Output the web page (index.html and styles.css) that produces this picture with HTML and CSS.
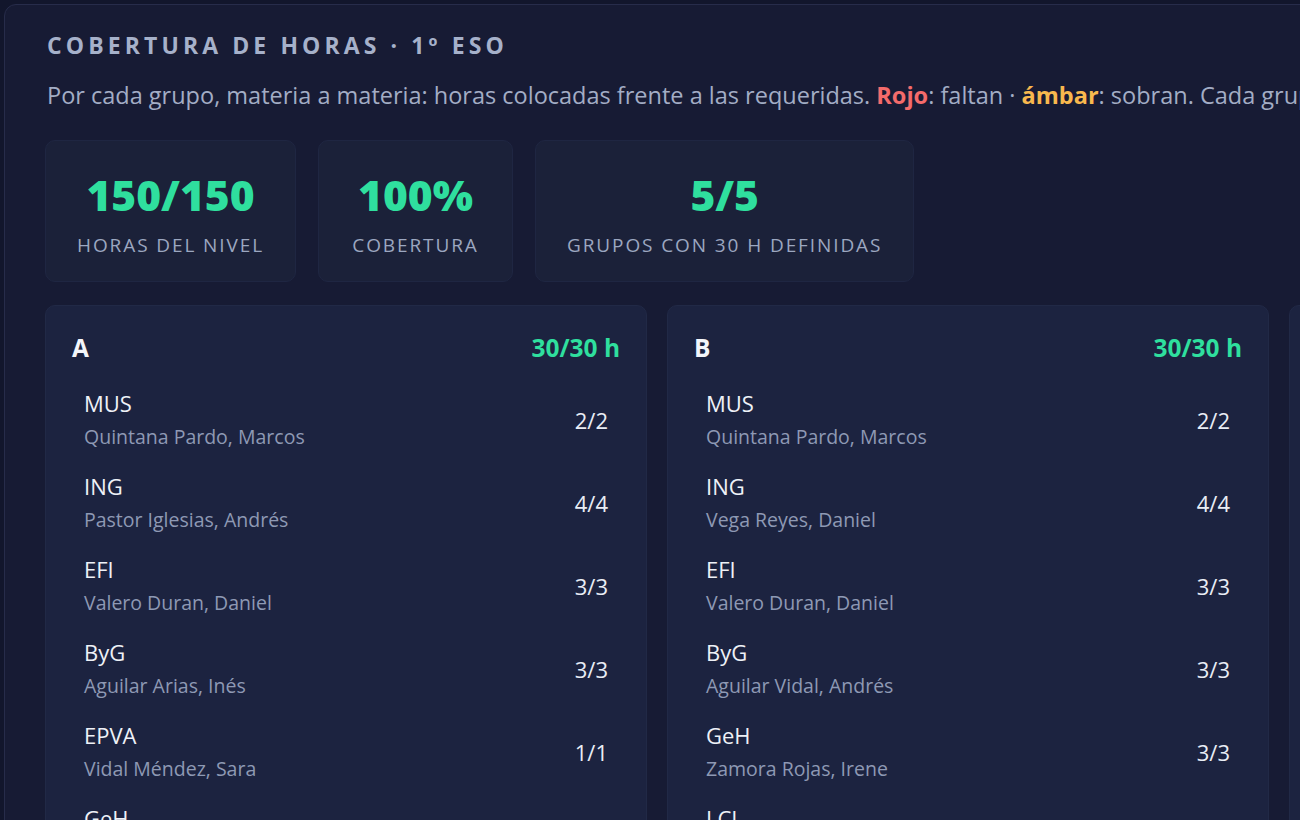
FILE: index.html
```html
<!DOCTYPE html>
<html lang="es">
<head>
    <meta charset="UTF-8">
    <meta name="viewport" content="width=device-width, initial-scale=1.0">
    <title>Cobertura de horas · 1º ESO</title>
    <link rel="stylesheet" href="styles.css">
</head>
<body>
    <div class="panel">
        <h2 class="title">Cobertura de horas · 1º ESO</h2>
        <p class="desc">Por cada grupo, materia a materia: horas colocadas frente a las requeridas. <b class="red">Rojo</b>: faltan · <b class="amber">ámbar</b>: sobran. Cada grupo debe sumar 30 horas semanales.</p>

        <div class="stats">
            <div class="stat">
                <div class="stat-num">150/150</div>
                <div class="stat-label">Horas del nivel</div>
            </div>
            <div class="stat">
                <div class="stat-num">100%</div>
                <div class="stat-label">Cobertura</div>
            </div>
            <div class="stat">
                <div class="stat-num">5/5</div>
                <div class="stat-label">Grupos con 30 h definidas</div>
            </div>
        </div>

        <div class="groups">
            <div class="group">
                <div class="group-head"><span class="group-name">A</span><span class="group-total">30/30 h</span></div>
                <div class="row"><div><div class="subj">MUS</div><div class="teacher">Quintana Pardo, Marcos</div></div><span class="hrs">2/2</span></div>
                <div class="row"><div><div class="subj">ING</div><div class="teacher">Pastor Iglesias, Andrés</div></div><span class="hrs">4/4</span></div>
                <div class="row"><div><div class="subj">EFI</div><div class="teacher">Valero Duran, Daniel</div></div><span class="hrs">3/3</span></div>
                <div class="row"><div><div class="subj">ByG</div><div class="teacher">Aguilar Arias, Inés</div></div><span class="hrs">3/3</span></div>
                <div class="row"><div><div class="subj">EPVA</div><div class="teacher">Vidal Méndez, Sara</div></div><span class="hrs">1/1</span></div>
                <div class="row"><div><div class="subj">GeH</div><div class="teacher">Zamora Rojas, Irene</div></div><span class="hrs">3/3</span></div>
                <div class="row"><div><div class="subj">LCL</div><div class="teacher">Herrera Campos, Lucía</div></div><span class="hrs">5/5</span></div>
            </div>
            <div class="group">
                <div class="group-head"><span class="group-name">B</span><span class="group-total">30/30 h</span></div>
                <div class="row"><div><div class="subj">MUS</div><div class="teacher">Quintana Pardo, Marcos</div></div><span class="hrs">2/2</span></div>
                <div class="row"><div><div class="subj">ING</div><div class="teacher">Vega Reyes, Daniel</div></div><span class="hrs">4/4</span></div>
                <div class="row"><div><div class="subj">EFI</div><div class="teacher">Valero Duran, Daniel</div></div><span class="hrs">3/3</span></div>
                <div class="row"><div><div class="subj">ByG</div><div class="teacher">Aguilar Vidal, Andrés</div></div><span class="hrs">3/3</span></div>
                <div class="row"><div><div class="subj">GeH</div><div class="teacher">Zamora Rojas, Irene</div></div><span class="hrs">3/3</span></div>
                <div class="row"><div><div class="subj">LCL</div><div class="teacher">Herrera Campos, Lucía</div></div><span class="hrs">5/5</span></div>
            </div>
            <div class="group">
                <div class="group-head"><span class="group-name">C</span><span class="group-total">30/30 h</span></div>
                <div class="row"><div><div class="subj">MUS</div><div class="teacher">Quintana Pardo, Marcos</div></div><span class="hrs">2/2</span></div>
                <div class="row"><div><div class="subj">ING</div><div class="teacher">Vega Reyes, Daniel</div></div><span class="hrs">4/4</span></div>
            </div>
        </div>
    </div>
</body>
</html>
```

FILE: styles.css
```css
html, body {
    margin: 0;
    overflow: hidden;
}
body {
    font-family: 'Open Sans', 'Noto Sans', sans-serif;
    background-color: #12162c;
    color: #e6eaf3;
}
.panel {
    width: max-content;
    margin: 4px 0 0 4px;
    padding: 25px 40px 40px 40px;
    background-color: #171b34;
    border: 1px solid #272c4a;
    border-radius: 12px;
}
.title {
    margin: 0 0 0 2px;
    font-size: 23px;
    font-weight: 700;
    line-height: 30px;
    letter-spacing: 4.1px;
    text-transform: uppercase;
    color: #a6b1ca;
}
.desc {
    margin: 19px 0 0 2px;
    font-size: 23.5px;
    line-height: 32px;
    color: #a3adc5;
}
.red {
    color: #f46b6b;
}
.amber {
    color: #f8b84e;
}
.stats {
    display: flex;
    gap: 22px;
    margin-top: 29px;
}
.stat {
    min-width: 131px;
    padding: 28px 31px 23px;
    text-align: center;
    background-color: #1b2139;
    border: 1px solid #1f2642;
    border-radius: 10px;
}
.stat-num {
    font-size: 42.5px;
    font-weight: 800;
    line-height: 52px;
    color: #2fdf9e;
}
.stat-label {
    margin-top: 11px;
    font-size: 19px;
    line-height: 26px;
    letter-spacing: 1.9px;
    text-transform: uppercase;
    color: #9ca7c0;
}
.groups {
    display: grid;
    grid-template-columns: repeat(3, 602px);
    gap: 20px;
    margin-top: 23px;
}
.group {
    padding: 26px 26px 20px 26px;
    background-color: #1c2340;
    border: 1px solid #212946;
    border-radius: 10px;
}
.group-head {
    display: flex;
    justify-content: space-between;
    align-items: center;
    margin-bottom: 15px;
    font-size: 24.5px;
    font-weight: 700;
    line-height: 32px;
}
.group-name {
    color: #f3f5fa;
}
.group-total {
    color: #2fdf9e;
}
.row {
    display: flex;
    justify-content: space-between;
    align-items: center;
    padding: 8px 12px 9px 12px;
}
.subj {
    font-size: 22px;
    line-height: 33px;
    color: #eef1f7;
}
.teacher {
    font-size: 19.5px;
    line-height: 33px;
    color: #8e99b4;
}
.hrs {
    font-size: 22px;
    color: #e9edf5;
}
```
